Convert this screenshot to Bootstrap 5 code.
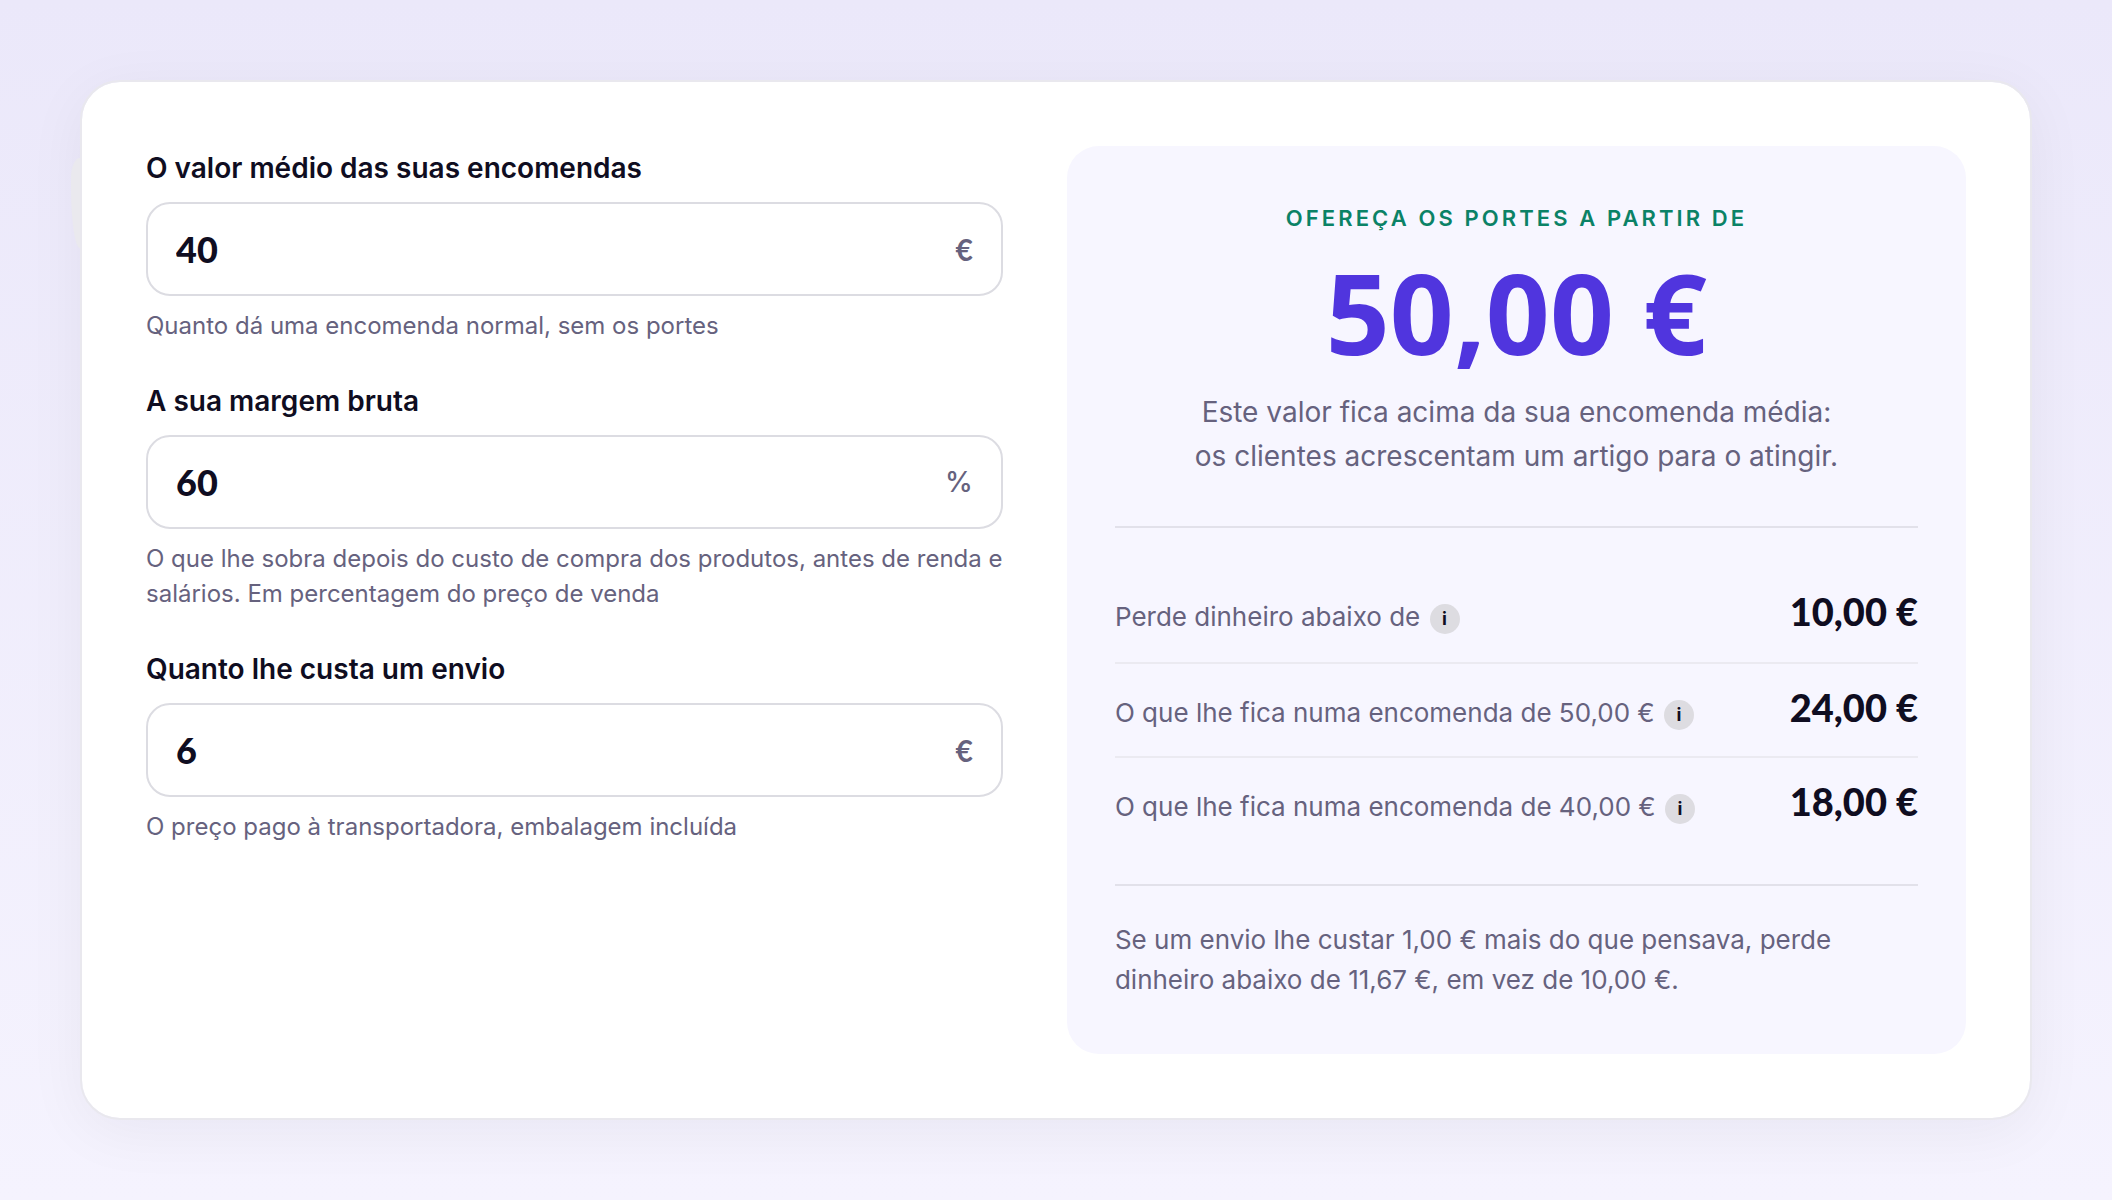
<!DOCTYPE html>
<html lang="pt">
<head>
<meta charset="utf-8">
<meta name="viewport" content="width=device-width, initial-scale=1">
<title>Portes grátis</title>
<link href="https://cdn.jsdelivr.net/npm/bootstrap@5.3.0/dist/css/bootstrap.min.css" rel="stylesheet">
<style>
  :root { --ink: #0f0d21; --muted: #66627e; --line: #dcdce2; --brand: #5035de; --ok: #0b8266; }
  body { font-family: Inter, sans-serif; color: var(--ink); background: linear-gradient(#ebe8fa, #f5f3fe) no-repeat; min-height: 100vh; }
  .page-wrap { padding: 80px; }
  .calc { position: relative; background: #fff; background-clip: padding-box; border: 2px solid #e9e8ee; border-radius: 40px; padding: 64px; box-shadow: 0 12px 60px rgba(15, 13, 33, .05); }
  /* soft tab peeking out behind the card edge */
  .calc::before { content: ""; position: absolute; left: -11px; top: 76px; width: 9px; height: 90px; background: #eae9ee; border-radius: 9px 0 0 9px / 20px 0 0 60px; }
  .calc-grid { display: grid; grid-template-columns: 61fr 64fr; gap: 64px; }
  .fields { gap: 36px; }
  .field-label { font-size: 28px; line-height: 44px; font-weight: 600; margin: 0 0 12px; }
  .field-box { border: 2px solid var(--line); border-radius: 24px; height: 94px; padding: 0 28px; background: #fff; }
  .field-box input { font-family: Lato, sans-serif; font-size: 36px; font-weight: 900; color: var(--ink); padding: 0; background: none; }
  .field-unit { font-size: 28px; font-weight: 500; color: var(--muted); }
  .euro-unit { font-family: Lato, sans-serif; font-size: 30px; font-weight: 700; }
  .field-hint { font-size: 24px; line-height: 35px; color: var(--muted); margin: 12px 0 0; }
  .result { background: #f7f6ff; border-radius: 32px; padding: 56px 48px 54px; }
  .eyebrow { font-size: 22px; line-height: 32px; font-weight: 600; letter-spacing: .14em; color: var(--ok); }
  .amount { font-family: "Noto Sans", sans-serif; font-size: 112px; line-height: 112px; font-weight: 700; color: var(--brand); margin: 22px 0; }
  .verdict { font-size: 28px; line-height: 44px; color: var(--muted); padding-bottom: 48px; }
  .facts { border: solid #e2e1ea; border-width: 2px 0; padding: 40px 0 34px; }
  .fact { height: 94px; padding-top: 20px; }
  .fact + .fact { border-top: 2px solid #ebeaf1; }
  .fact dt { font-size: 26px; font-weight: 400; color: var(--muted); }
  .fact dd { font-family: Lato, sans-serif; font-size: 38px; line-height: 46px; font-weight: 900; }
  .tip { width: 30px; height: 30px; font-size: 18px; font-weight: 700; color: var(--ink); background: #dddce1; vertical-align: middle; margin-left: 2px; }
  .footnote { font-size: 26px; line-height: 40px; color: var(--muted); padding-top: 34px; }
  @media (max-width: 1199px) { .calc-grid { grid-template-columns: 1fr; } .page-wrap { padding: 24px; } .calc { padding: 32px; } }
</style>
</head>
<body>
<main class="page-wrap">
  <section class="calc">
    <div class="calc-grid">
      <form class="fields d-flex flex-column">
        <div>
          <label class="field-label d-block" for="aov">O valor médio das suas encomendas</label>
          <div class="field-box d-flex align-items-center">
            <input class="form-control border-0 shadow-none" id="aov" type="text" inputmode="decimal" value="40">
            <span class="field-unit euro-unit">€</span>
          </div>
          <p class="field-hint">Quanto dá uma encomenda normal, sem os portes</p>
        </div>
        <div>
          <label class="field-label d-block" for="margin">A sua margem bruta</label>
          <div class="field-box d-flex align-items-center">
            <input class="form-control border-0 shadow-none" id="margin" type="text" inputmode="decimal" value="60">
            <span class="field-unit">%</span>
          </div>
          <p class="field-hint">O que lhe sobra depois do custo de compra dos produtos, antes de renda e salários. Em percentagem do preço de venda</p>
        </div>
        <div>
          <label class="field-label d-block" for="ship">Quanto lhe custa um envio</label>
          <div class="field-box d-flex align-items-center">
            <input class="form-control border-0 shadow-none" id="ship" type="text" inputmode="decimal" value="6">
            <span class="field-unit euro-unit">€</span>
          </div>
          <p class="field-hint">O preço pago à transportadora, embalagem incluída</p>
        </div>
      </form>
      <div class="result">
        <div class="text-center">
          <div class="eyebrow text-uppercase">Ofereça os portes a partir de</div>
          <div class="amount">50,00 €</div>
          <div class="verdict">Este valor fica acima da sua encomenda média:<br>os clientes acrescentam um artigo para o atingir.</div>
        </div>
        <dl class="facts mb-0">
          <div class="fact d-flex align-items-baseline justify-content-between">
            <dt>Perde dinheiro abaixo de <button type="button" class="tip btn d-inline-flex align-items-center justify-content-center rounded-circle p-0 border-0 lh-1" aria-label="Mais informação">i</button></dt>
            <dd class="mb-0">10,00 €</dd>
          </div>
          <div class="fact d-flex align-items-baseline justify-content-between">
            <dt>O que lhe fica numa encomenda de 50,00 € <button type="button" class="tip btn d-inline-flex align-items-center justify-content-center rounded-circle p-0 border-0 lh-1" aria-label="Mais informação">i</button></dt>
            <dd class="mb-0">24,00 €</dd>
          </div>
          <div class="fact d-flex align-items-baseline justify-content-between">
            <dt>O que lhe fica numa encomenda de 40,00 € <button type="button" class="tip btn d-inline-flex align-items-center justify-content-center rounded-circle p-0 border-0 lh-1" aria-label="Mais informação">i</button></dt>
            <dd class="mb-0">18,00 €</dd>
          </div>
        </dl>
        <p class="footnote mb-0">Se um envio lhe custar 1,00 € mais do que pensava, perde dinheiro abaixo de 11,67 €, em vez de 10,00 €.</p>
      </div>
    </div>
  </section>
</main>
<script src="https://cdn.jsdelivr.net/npm/bootstrap@5.3.0/dist/js/bootstrap.bundle.min.js"></script>
</body>
</html>
